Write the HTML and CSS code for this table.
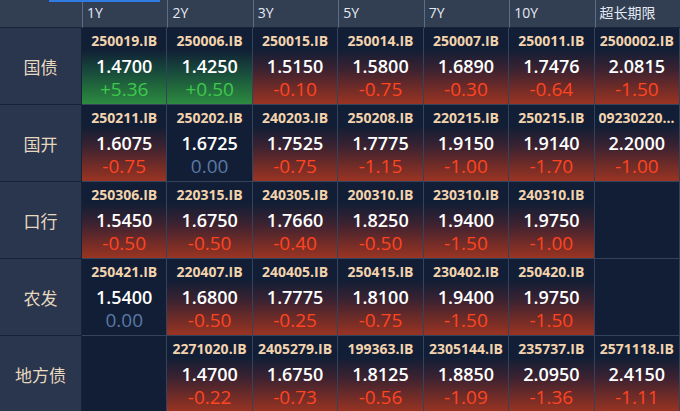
FILE: index.html
```html
<!DOCTYPE html>
<html lang="zh">
<head>
<meta charset="utf-8">
<title>Bond Yields</title>
<link rel="stylesheet" href="styles.css">
</head>
<body>
<div class="board">
  <div class="tab-indicator"></div>
  <div class="grid">
    <div class="hcell hlabel"></div>
    <div class="hcell">1Y</div>
    <div class="hcell">2Y</div>
    <div class="hcell">3Y</div>
    <div class="hcell">5Y</div>
    <div class="hcell">7Y</div>
    <div class="hcell">10Y</div>
    <div class="hcell">超长期限</div>

    <div class="label">国债</div>
    <div class="cell up"><div class="code">250019.IB</div><div class="price">1.4700</div><div class="chg g">+5.36</div></div>
    <div class="cell up"><div class="code">250006.IB</div><div class="price">1.4250</div><div class="chg g">+0.50</div></div>
    <div class="cell down"><div class="code">250015.IB</div><div class="price">1.5150</div><div class="chg r">-0.10</div></div>
    <div class="cell down"><div class="code">250014.IB</div><div class="price">1.5800</div><div class="chg r">-0.75</div></div>
    <div class="cell down"><div class="code">250007.IB</div><div class="price">1.6890</div><div class="chg r">-0.30</div></div>
    <div class="cell down"><div class="code">250011.IB</div><div class="price">1.7476</div><div class="chg r">-0.64</div></div>
    <div class="cell down"><div class="code">2500002.IB</div><div class="price">2.0815</div><div class="chg r">-1.50</div></div>

    <div class="label">国开</div>
    <div class="cell down"><div class="code">250211.IB</div><div class="price">1.6075</div><div class="chg r">-0.75</div></div>
    <div class="cell"><div class="code">250202.IB</div><div class="price">1.6725</div><div class="chg z">0.00</div></div>
    <div class="cell down"><div class="code">240203.IB</div><div class="price">1.7525</div><div class="chg r">-0.75</div></div>
    <div class="cell down"><div class="code">250208.IB</div><div class="price">1.7775</div><div class="chg r">-1.15</div></div>
    <div class="cell down"><div class="code">220215.IB</div><div class="price">1.9150</div><div class="chg r">-1.00</div></div>
    <div class="cell down"><div class="code">250215.IB</div><div class="price">1.9140</div><div class="chg r">-1.70</div></div>
    <div class="cell down"><div class="code">092302200001.IB</div><div class="price">2.2000</div><div class="chg r">-1.00</div></div>

    <div class="label">口行</div>
    <div class="cell down"><div class="code">250306.IB</div><div class="price">1.5450</div><div class="chg r">-0.50</div></div>
    <div class="cell down"><div class="code">220315.IB</div><div class="price">1.6750</div><div class="chg r">-0.50</div></div>
    <div class="cell down"><div class="code">240305.IB</div><div class="price">1.7660</div><div class="chg r">-0.40</div></div>
    <div class="cell down"><div class="code">200310.IB</div><div class="price">1.8250</div><div class="chg r">-0.50</div></div>
    <div class="cell down"><div class="code">230310.IB</div><div class="price">1.9400</div><div class="chg r">-1.50</div></div>
    <div class="cell down"><div class="code">240310.IB</div><div class="price">1.9750</div><div class="chg r">-1.00</div></div>
    <div class="cell"></div>

    <div class="label">农发</div>
    <div class="cell"><div class="code">250421.IB</div><div class="price">1.5400</div><div class="chg z">0.00</div></div>
    <div class="cell down"><div class="code">220407.IB</div><div class="price">1.6800</div><div class="chg r">-0.50</div></div>
    <div class="cell down"><div class="code">240405.IB</div><div class="price">1.7775</div><div class="chg r">-0.25</div></div>
    <div class="cell down"><div class="code">250415.IB</div><div class="price">1.8100</div><div class="chg r">-0.75</div></div>
    <div class="cell down"><div class="code">230402.IB</div><div class="price">1.9400</div><div class="chg r">-1.50</div></div>
    <div class="cell down"><div class="code">250420.IB</div><div class="price">1.9750</div><div class="chg r">-1.50</div></div>
    <div class="cell"></div>

    <div class="label">地方债</div>
    <div class="cell"></div>
    <div class="cell down"><div class="code">2271020.IB</div><div class="price">1.4700</div><div class="chg r">-0.22</div></div>
    <div class="cell down"><div class="code">2405279.IB</div><div class="price">1.6750</div><div class="chg r">-0.73</div></div>
    <div class="cell down"><div class="code">199363.IB</div><div class="price">1.8125</div><div class="chg r">-0.56</div></div>
    <div class="cell down"><div class="code">2305144.IB</div><div class="price">1.8850</div><div class="chg r">-1.09</div></div>
    <div class="cell down"><div class="code">235737.IB</div><div class="price">2.0950</div><div class="chg r">-1.36</div></div>
    <div class="cell down"><div class="code">2571118.IB</div><div class="price">2.4150</div><div class="chg r">-1.11</div></div>
  </div>
</div>
</body>
</html>
```

FILE: styles.css
```css
* { box-sizing: border-box; }
html, body {
  margin: 0;
  padding: 0;
  background: #111e35;
  overflow: hidden;
}
body {
  font-family: "Open Sans", "Noto Sans CJK SC", sans-serif;
  width: 680px;
  height: 411px;
}
.board {
  position: relative;
  width: 680px;
  height: 411px;
  overflow: hidden;
}
.tab-indicator {
  position: absolute;
  left: 49px;
  top: 0;
  width: 111px;
  height: 2px;
  background: #2f7be2;
}
.grid {
  display: grid;
  grid-template-columns: 82px repeat(7, 1fr);
  grid-template-rows: 28px repeat(5, 77px);
}
.hcell {
  background: #323e51;
  border-bottom: 1px solid #1a2438;
  border-left: 1px solid #5d6d88;
  color: #e4eaf4;
  font-size: 14px;
  line-height: 26px;
  padding-left: 4px;
  white-space: nowrap;
  overflow: hidden;
}
.hlabel { border-left: none; }
.label {
  background: #29364d;
  border-right: 1px solid #182236;
  border-bottom: 1px solid #182236;
  color: #e8d8bf;
  font-family: "Noto Sans CJK SC", sans-serif;
  font-size: 17px;
  display: flex;
  align-items: center;
  justify-content: center;
}
.cell {
  background: #111e35;
  border-right: 1px solid #33435c;
  border-bottom: 1px solid #33435c;
  display: flex;
  flex-direction: column;
  align-items: center;
  padding-top: 3px;
  min-width: 0;
  overflow: hidden;
}
.cell.down {
  background: linear-gradient(180deg, #111e35 0%, #121e35 28%, #3a2231 54%, #722c27 80%, #9a3423 100%);
}
.cell.up {
  background: linear-gradient(180deg, #111e35 0%, #111f35 28%, #17453b 54%, #236d3d 80%, #2c8a40 100%);
}
.code {
  color: #f2d3ad;
  font-size: 14px;
  font-weight: 700;
  line-height: 20px;
  max-width: 100%;
  padding: 0 4px;
  white-space: nowrap;
  overflow: hidden;
  text-overflow: ellipsis;
}
.price {
  color: #ffffff;
  font-size: 18px;
  font-weight: 600;
  line-height: 30px;
}
.chg {
  font-size: 19px;
  line-height: 17px;
}
.chg.r { color: #ff4420; }
.chg.g { color: #3ec84e; }
.chg.z { color: #5b79a6; }
```
